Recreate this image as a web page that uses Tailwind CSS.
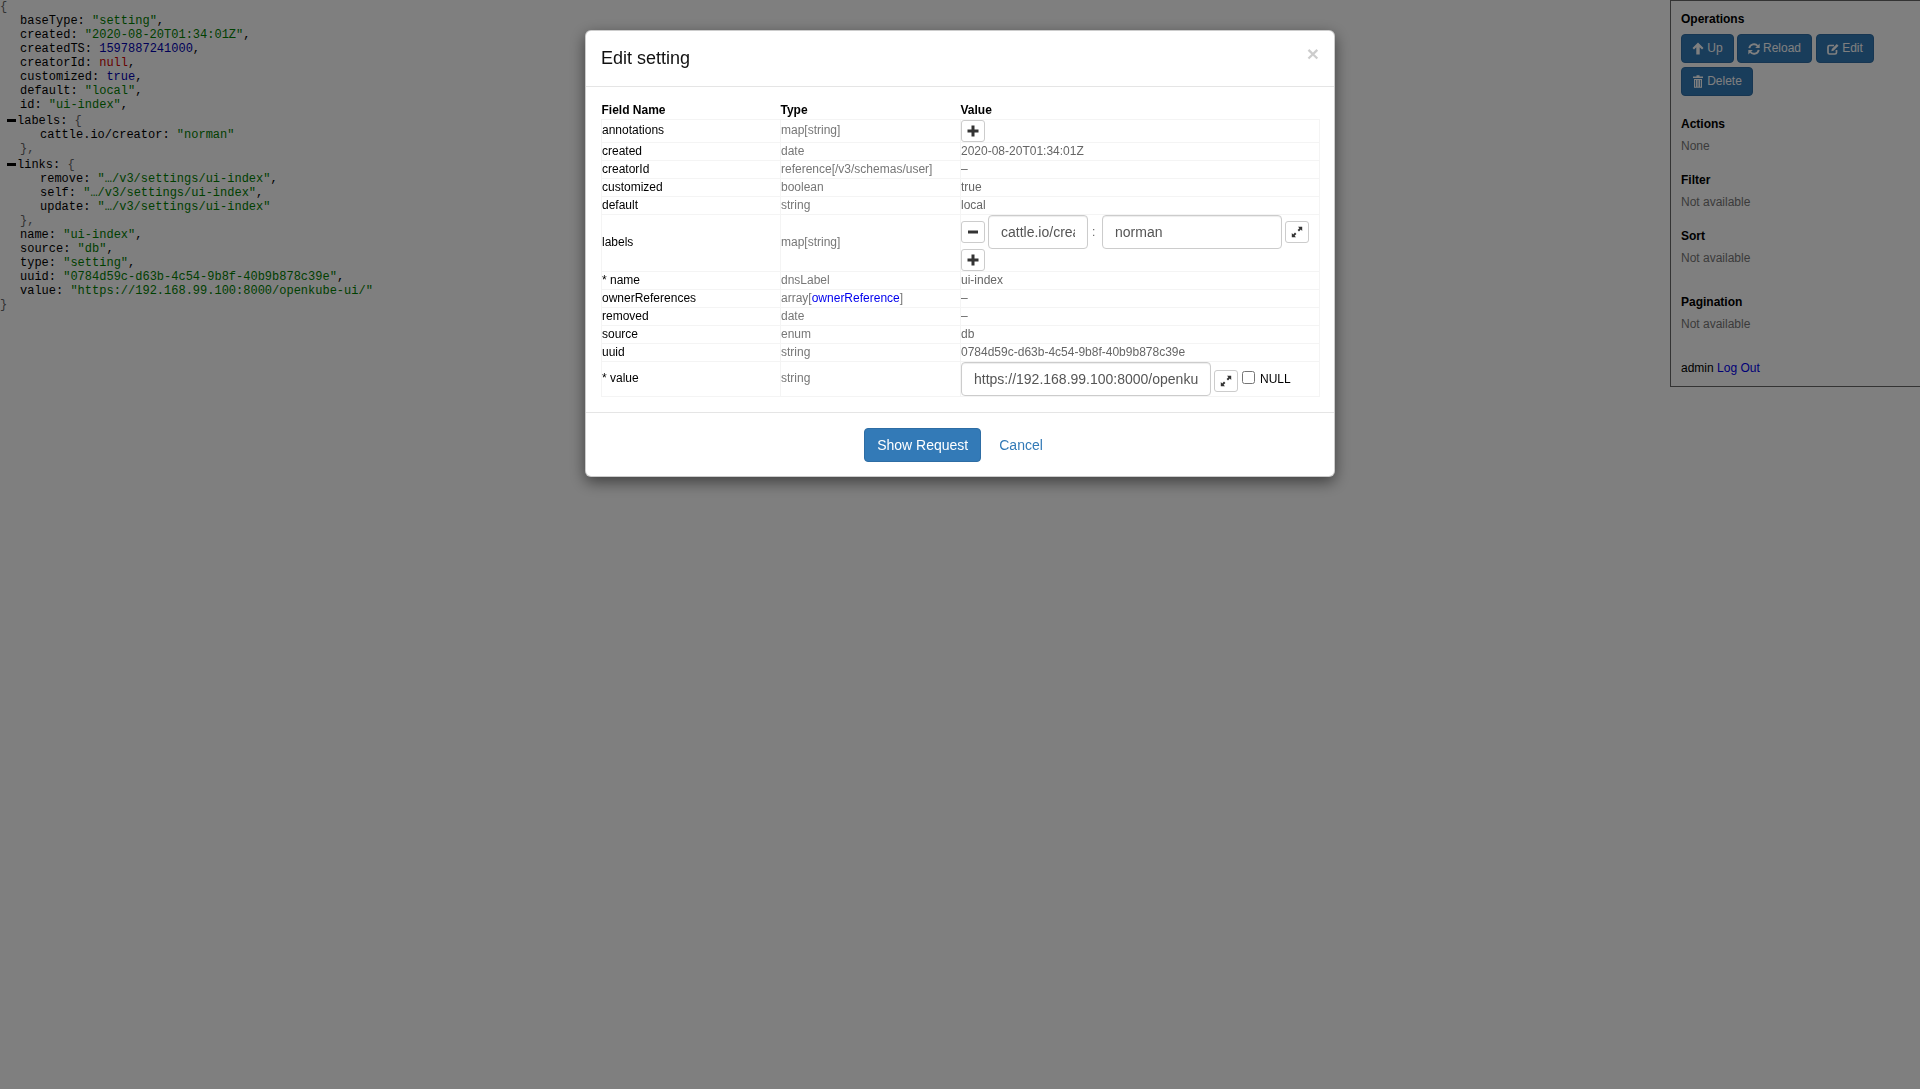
<!DOCTYPE html>
<html lang="en">
<head>
    <meta charset="UTF-8">
    <title>Edit setting</title>
    <script src="https://cdn.jsdelivr.net/npm/@tailwindcss/browser@4"></script>
</head>
<body class="bg-white h-[1089px] overflow-hidden font-['Liberation_Sans',Arial,sans-serif] text-[12px] leading-[17px] text-[#333]">
    <!-- Page behind the dialog -->
    <div class="flex justify-between items-start">
        <!-- JSON view -->
        <div class="font-['Liberation_Mono','Courier_New',monospace] text-[12px] leading-[14px] text-black whitespace-nowrap">
            <div class="text-[#666]">{</div>
            <div class="pl-[20px]">baseType: <span class="text-[#008000]">"setting"</span>,</div>
            <div class="pl-[20px]">created: <span class="text-[#008000]">"2020-08-20T01:34:01Z"</span>,</div>
            <div class="pl-[20px]">createdTS: <span class="text-[#0000b0]">1597887241000</span>,</div>
            <div class="pl-[20px]">creatorId: <span class="text-[#d00000]">null</span>,</div>
            <div class="pl-[20px]">customized: <span class="text-[#0000b0]">true</span>,</div>
            <div class="pl-[20px]">default: <span class="text-[#008000]">"local"</span>,</div>
            <div class="pl-[20px]">id: <span class="text-[#008000]">"ui-index"</span>,</div>
            <div class="relative pl-[17px] mt-[2px]"><span class="absolute left-[7px] top-[5px] w-[9px] h-[3px] bg-black"></span>labels: <span class="text-[#666]">{</span></div>
            <div class="pl-[40px]">cattle.io/creator: <span class="text-[#008000]">"norman"</span></div>
            <div class="pl-[20px] text-[#666]">},</div>
            <div class="relative pl-[17px] mt-[2px]"><span class="absolute left-[7px] top-[5px] w-[9px] h-[3px] bg-black"></span>links: <span class="text-[#666]">{</span></div>
            <div class="pl-[40px]">remove: <span class="text-[#008000]">"…/v3/settings/ui-index"</span>,</div>
            <div class="pl-[40px]">self: <span class="text-[#008000]">"…/v3/settings/ui-index"</span>,</div>
            <div class="pl-[40px]">update: <span class="text-[#008000]">"…/v3/settings/ui-index"</span></div>
            <div class="pl-[20px] text-[#666]">},</div>
            <div class="pl-[20px]">name: <span class="text-[#008000]">"ui-index"</span>,</div>
            <div class="pl-[20px]">source: <span class="text-[#008000]">"db"</span>,</div>
            <div class="pl-[20px]">type: <span class="text-[#008000]">"setting"</span>,</div>
            <div class="pl-[20px]">uuid: <span class="text-[#008000]">"0784d59c-d63b-4c54-9b8f-40b9b878c39e"</span>,</div>
            <div class="pl-[20px]">value: <span class="text-[#008000]">"https://192.168.99.100:8000/openkube-ui/"</span></div>
            <div class="text-[#666]">}</div>
        </div>

        <!-- Operations panel -->
        <div class="w-[250px] h-[387px] border border-[#666] border-r-0 pl-[10px] pr-[10px] pt-[10px] text-black bg-white">
            <div class="font-bold">Operations</div>
            <div class="flex flex-wrap gap-x-[3px] gap-y-[4px] mt-[6px]">
                <button class="w-[53px] h-[29px] bg-[#337ab7] border border-[#2e6da4] rounded-[4px] text-white flex items-center justify-center gap-[3px]">
                    <svg class="w-[12px] h-[13px]" viewBox="0 0 12 13" fill="currentColor"><path d="M6 .500l5.500 5.500-1.500 1.500-2.300-2.200V12.500H4.300V5.300L2 7.500.500 6z"/></svg>Up
                </button>
                <button class="w-[75px] h-[29px] bg-[#337ab7] border border-[#2e6da4] rounded-[4px] text-white flex items-center justify-center gap-[3px]">
                    <svg class="w-[12px] h-[12px]" viewBox="0 0 12 12" fill="none" stroke="currentColor" stroke-width="1.900"><path d="M1.300 5.200A4.800 4.800 0 0 1 9.700 3"/><path d="M10.700 6.800A4.800 4.800 0 0 1 2.300 9"/><path d="M11.700.500v4.500H7.200z" fill="currentColor" stroke="none"/><path d="M.300 11.500V7h4.500z" fill="currentColor" stroke="none"/></svg>Reload
                </button>
                <button class="ml-[1px] w-[58px] h-[29px] bg-[#337ab7] border border-[#2e6da4] rounded-[4px] text-white flex items-center justify-center gap-[3px]">
                    <svg class="w-[12px] h-[12px]" viewBox="0 0 12 12" fill="none" stroke="currentColor" stroke-width="1.700"><path d="M9.500 7v2.500a1.500 1.500 0 0 1-1.500 1.500H2.500A1.500 1.500 0 0 1 1 9.500V4a1.500 1.500 0 0 1 1.500-1.500H7"/><path d="M4.300 8.200l.5-2.200L9.800 1l1.700 1.700-5 5z" fill="currentColor" stroke="none"/></svg>Edit
                </button>
                <button class="w-[72px] h-[29px] bg-[#337ab7] border border-[#2e6da4] rounded-[4px] text-white flex items-center justify-center gap-[3px]">
                    <svg class="w-[12px] h-[13px]" viewBox="0 0 12 13" fill="currentColor"><path d="M4.500.300h3V1.500H11V3H1V1.500h3.500z"/><path d="M2 4h8v8.700H2zM3.200 5v6.800h.8V5zM5.600 5v6.800h.8V5zM8 5v6.800h.8V5z" fill-rule="evenodd"/></svg>Delete
                </button>
            </div>
            <div class="font-bold mt-[20px]">Actions</div>
            <div class="text-[#777] mt-[5px]">None</div>
            <div class="font-bold mt-[17px]">Filter</div>
            <div class="text-[#777] mt-[5px]">Not available</div>
            <div class="font-bold mt-[17px]">Sort</div>
            <div class="text-[#777] mt-[5px]">Not available</div>
            <div class="font-bold mt-[27px]">Pagination</div>
            <div class="text-[#777] mt-[5px]">Not available</div>
            <div class="mt-[27px]">admin <a href="#" class="text-[#0000ee]">Log Out</a></div>
        </div>
    </div>

    <!-- Backdrop -->
    <div class="fixed inset-0 bg-black/50"></div>

    <!-- Dialog -->
    <div class="fixed left-[585px] top-[30px] w-[750px] bg-white border border-black/20 rounded-[6px] shadow-[0_5px_15px_rgba(0,0,0,0.5)]">
        <div class="relative h-[56px] border-b border-[#e5e5e5] px-[15px] pb-[2px] flex items-center">
            <h4 class="text-[18px] leading-[20px] text-[#111]">Edit setting</h4>
            <span class="absolute right-[15px] top-[12px] text-[21px] leading-[21px] font-bold text-black/20">×</span>
        </div>

        <div class="px-[15px] pt-[15px] pb-[15px] h-[325px]">
            <table class="w-[719px] table-fixed border-collapse text-left">
                <thead>
                    <tr class="h-[17px]">
                        <th class="w-[179px] p-0 font-bold text-black">Field Name</th>
                        <th class="w-[180px] p-0 font-bold text-black">Type</th>
                        <th class="p-0 font-bold text-black">Value</th>
                    </tr>
                </thead>
                <tbody class="[&_td]:border [&_td]:border-[#f4f4f4] [&_td]:p-0 [&_td:nth-child(1)]:text-black [&_td:nth-child(2)]:text-[#777] [&_td:nth-child(3)]:text-[#666]">
                    <tr class="h-[23px]">
                        <td class="pb-[2px]!">annotations</td>
                        <td class="pb-[2px]!">map[string]</td>
                        <td>
                            <button class="flex items-center justify-center w-[24px] h-[22px] bg-white border border-[#ccc] rounded-[3px] text-[#333]">
                                <svg class="w-[12px] h-[12px]" viewBox="0 0 12 12" fill="currentColor"><path d="M4.500.500h3v4h4v3h-4v4h-3v-4h-4v-3h4z"/></svg>
                            </button>
                        </td>
                    </tr>
                    <tr class="h-[18px]"><td>created</td><td>date</td><td>2020-08-20T01:34:01Z</td></tr>
                    <tr class="h-[18px]"><td>creatorId</td><td>reference[/v3/schemas/user]</td><td>–</td></tr>
                    <tr class="h-[18px]"><td>customized</td><td>boolean</td><td>true</td></tr>
                    <tr class="h-[18px]"><td>default</td><td>string</td><td>local</td></tr>
                    <tr class="h-[57px]">
                        <td class="pb-[2px]!">labels</td>
                        <td class="pb-[2px]!">map[string]</td>
                        <td>
                            <div class="flex items-center">
                                <button class="flex items-center justify-center w-[24px] h-[22px] bg-white border border-[#ccc] rounded-[3px] text-[#333]">
                                    <svg class="w-[12px] h-[12px]" viewBox="0 0 12 12" fill="currentColor"><path d="M1 4.500h10v3H1z"/></svg>
                                </button>
                                <input class="ml-[3px] w-[100px] h-[34px] px-[12px] border border-[#ccc] rounded-[4px] text-[14px] text-[#555] shadow-[inset_0_1px_1px_rgba(0,0,0,0.075)]" value="cattle.io/creator">
                                <span class="w-[14px] pl-[4px]">:</span>
                                <input class="w-[180px] h-[34px] px-[12px] border border-[#ccc] rounded-[4px] text-[14px] text-[#555] shadow-[inset_0_1px_1px_rgba(0,0,0,0.075)]" value="norman">
                                <button class="ml-[3px] flex items-center justify-center w-[24px] h-[22px] bg-white border border-[#ccc] rounded-[3px] text-[#333]">
                                    <svg class="w-[12px] h-[12px]" viewBox="0 0 12 12" fill="currentColor"><path d="M7 .800h4.200V5L9.800 3.600 8 5.400 6.600 4 8.400 2.200z"/><path d="M5 11.200H.800V7l1.400 1.400L4 6.600 5.400 8 3.600 9.800z"/></svg>
                                </button>
                            </div>
                            <button class="flex items-center justify-center w-[24px] h-[22px] bg-white border border-[#ccc] rounded-[3px] text-[#333]">
                                <svg class="w-[12px] h-[12px]" viewBox="0 0 12 12" fill="currentColor"><path d="M4.500.500h3v4h4v3h-4v4h-3v-4h-4v-3h4z"/></svg>
                            </button>
                        </td>
                    </tr>
                    <tr class="h-[18px]"><td>* name</td><td>dnsLabel</td><td>ui-index</td></tr>
                    <tr class="h-[18px]"><td>ownerReferences</td><td>array[<a href="#" class="text-[#0000ee]">ownerReference</a>]</td><td>–</td></tr>
                    <tr class="h-[18px]"><td>removed</td><td>date</td><td>–</td></tr>
                    <tr class="h-[18px]"><td>source</td><td>enum</td><td>db</td></tr>
                    <tr class="h-[18px]"><td>uuid</td><td>string</td><td>0784d59c-d63b-4c54-9b8f-40b9b878c39e</td></tr>
                    <tr class="h-[35px]">
                        <td class="pb-[2px]!">* value</td>
                        <td class="pb-[2px]!">string</td>
                        <td>
                            <div class="flex items-center">
                                <input class="w-[250px] h-[34px] px-[12px] border border-[#ccc] rounded-[4px] text-[14px] text-[#555] shadow-[inset_0_1px_1px_rgba(0,0,0,0.075)]" value="https://192.168.99.100:8000/openkube-ui/">
                                <button class="ml-[3px] mt-[3px] flex items-center justify-center w-[24px] h-[22px] bg-white border border-[#ccc] rounded-[3px] text-[#333]">
                                    <svg class="w-[12px] h-[12px]" viewBox="0 0 12 12" fill="currentColor"><path d="M7 .800h4.200V5L9.800 3.600 8 5.400 6.600 4 8.400 2.200z"/><path d="M5 11.200H.800V7l1.400 1.400L4 6.600 5.400 8 3.600 9.800z"/></svg>
                                </button>
                                <input type="checkbox" class="ml-[4px] mb-[4px] w-[13px] h-[13px]">
                                <span class="ml-[5px] mt-[1px] text-black">NULL</span>
                            </div>
                        </td>
                    </tr>
                </tbody>
            </table>
        </div>

        <div class="h-[64px] border-t border-[#e5e5e5] pt-[15px] pr-[13px] flex justify-center">
            <button class="h-[34px] px-[12px] bg-[#337ab7] border border-[#2e6da4] rounded-[4px] text-white text-[14px]">Show Request</button>
            <a href="#" class="ml-[18px] h-[34px] leading-[34px] text-[14px] text-[#337ab7]">Cancel</a>
        </div>
    </div>
</body>
</html>
